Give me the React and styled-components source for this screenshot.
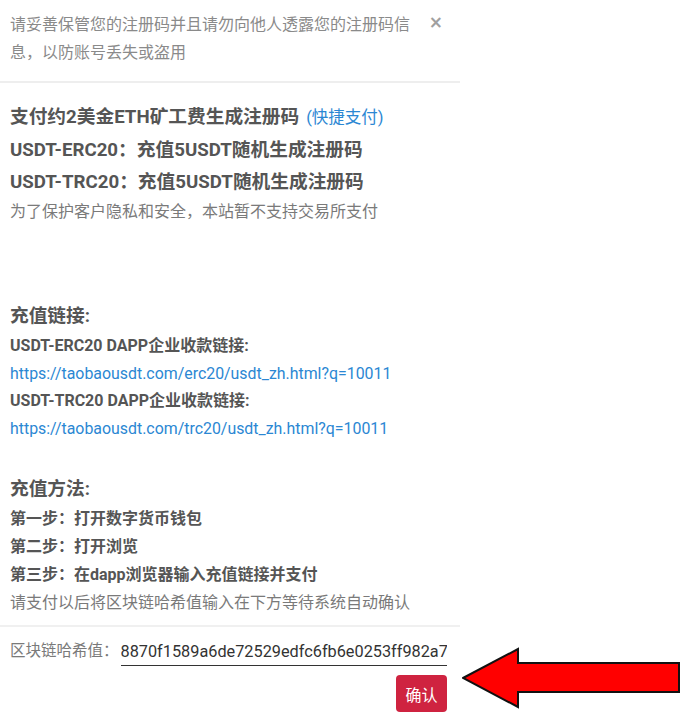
import React from "react";
import styled, { createGlobalStyle } from "styled-components";

const GlobalStyle = createGlobalStyle`
  html, body {
    margin: 0;
    padding: 0;
    background: #fff;
  }
  body {
    font-family: Roboto, "Noto Sans CJK SC", sans-serif;
  }
`;

const App = () => {
  return (
    <Page>
      <GlobalStyle />
      <Panel>
        <Header>
          <Notice>请妥善保管您的注册码并且请勿向他人透露您的注册码信息，以防账号丢失或盗用</Notice>
          <Close>×</Close>
        </Header>

        <Body>
          <Title>
            支付约2美金ETH矿工费生成注册码
            <QuickPay>(快捷支付)</QuickPay>
          </Title>
          <Title>USDT-ERC20：充值5USDT随机生成注册码</Title>
          <Title>USDT-TRC20：充值5USDT随机生成注册码</Title>
          <Note>为了保护客户隐私和安全，本站暂不支持交易所支付</Note>

          <Section $gap={74}>
            <Title>充值链接:</Title>
            <Label>USDT-ERC20 DAPP企业收款链接:</Label>
            <Link>https://taobaousdt.com/erc20/usdt_zh.html?q=10011</Link>
            <Label>USDT-TRC20 DAPP企业收款链接:</Label>
            <Link>https://taobaousdt.com/trc20/usdt_zh.html?q=10011</Link>
          </Section>

          <Section $gap={31}>
            <Title>充值方法:</Title>
            <Label>第一步：打开数字货币钱包</Label>
            <Label>第二步：打开浏览</Label>
            <Label>第三步：在dapp浏览器输入充值链接并支付</Label>
            <Note>请支付以后将区块链哈希值输入在下方等待系统自动确认</Note>
          </Section>
        </Body>

        <Footer>
          <HashRow>
            <HashLabel>区块链哈希值：</HashLabel>
            <HashInput
              readOnly
              value="8870f1589a6de72529edfc6fb6e0253ff982a7c4d1e0b6f4a93c"
            />
          </HashRow>
          <Actions>
            <ConfirmButton>确认</ConfirmButton>
          </Actions>
        </Footer>
      </Panel>

      <Arrow width="222" height="63" viewBox="0 0 222 63">
        <polygon
          points="1,31 56,2 56,16 217,16 217,45 56,45 56,60"
          fill="#ff0000"
          stroke="#111"
          strokeWidth="2"
          strokeLinejoin="miter"
        />
      </Arrow>
    </Page>
  );
};

export default App;

const Page = styled.div`
  display: flex;
  flex-direction: row;
  align-items: flex-end;
  width: 692px;
`;

const Panel = styled.div`
  width: 460px;
  display: flex;
  flex-direction: column;
`;

const Header = styled.div`
  display: flex;
  flex-direction: row;
  justify-content: space-between;
  align-items: flex-start;
  padding: 11px 17px 14px 10px;
  border-bottom: 2px solid #eeeeee;
`;

const Notice = styled.p`
  margin: 0;
  width: 412px;
  font-size: 16px;
  line-height: 28px;
  color: #8a8a8a;
`;

const Close = styled.span`
  font-family: "DejaVu Sans", sans-serif;
  font-size: 17px;
  font-weight: bold;
  line-height: 22px;
  color: #a0a0a0;
`;

const Body = styled.div`
  display: flex;
  flex-direction: column;
  padding: 18px 10px 0 10px;
`;

const Section = styled.div`
  display: flex;
  flex-direction: column;
  margin-top: ${(props) => props.$gap}px;
`;

const Title = styled.div`
  font-size: 18.7px;
  font-weight: bold;
  line-height: 32px;
  color: #555555;
`;

const QuickPay = styled.span`
  font-size: 16.5px;
  font-weight: normal;
  color: #2b87d3;
  margin-left: 7px;
`;

const Note = styled.p`
  margin: 0;
  font-size: 16px;
  line-height: 28px;
  color: #7a7a7a;
`;

const Label = styled.div`
  font-size: 16px;
  font-weight: bold;
  line-height: 28px;
  color: #555555;
`;

const Link = styled.a`
  font-size: 15.9px;
  line-height: 27px;
  color: #2b87d3;
  text-decoration: none;
`;

const Footer = styled.div`
  display: flex;
  flex-direction: column;
  margin-top: 8px;
  border-top: 2px solid #f0f0f0;
  padding: 9px 13px 13px 10px;
`;

const HashRow = styled.div`
  display: flex;
  flex-direction: row;
  align-items: flex-end;
`;

const HashLabel = styled.span`
  font-size: 15.5px;
  line-height: 30px;
  color: #7a7a7a;
  white-space: nowrap;
  margin-right: 2px;
`;

const HashInput = styled.input`
  flex: 1;
  min-width: 0;
  height: 30px;
  padding: 2px 0 0 0;
  box-sizing: border-box;
  border: none;
  border-bottom: 1px solid #333333;
  outline: none;
  font-family: Roboto, sans-serif;
  font-size: 16.3px;
  color: #333333;
  background: transparent;
`;

const Actions = styled.div`
  display: flex;
  justify-content: flex-end;
  margin-top: 9px;
`;

const ConfirmButton = styled.button`
  width: 51px;
  height: 37px;
  padding: 0;
  border: none;
  border-radius: 4px;
  background: #cf2340;
  color: #ffffff;
  font-family: Roboto, "Noto Sans CJK SC", sans-serif;
  font-size: 16px;
  cursor: pointer;
`;

const Arrow = styled.svg`
  display: block;
  flex-shrink: 0;
  margin-left: 2px;
  margin-bottom: 15px;
`;
